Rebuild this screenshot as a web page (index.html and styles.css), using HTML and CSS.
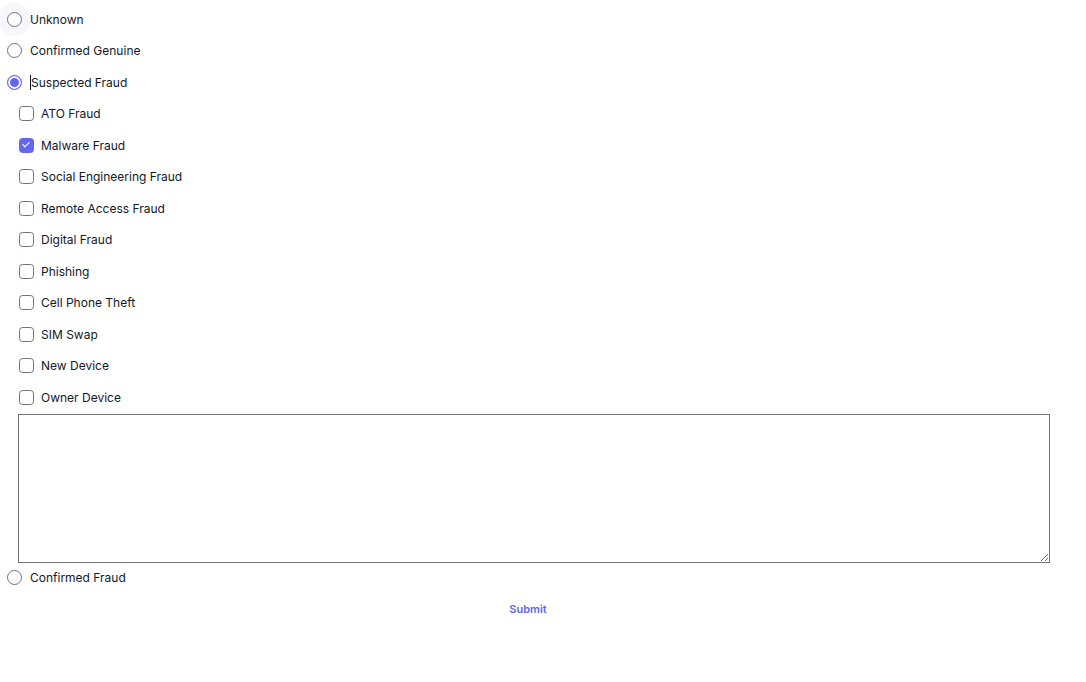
FILE: index.html
```html
<!DOCTYPE html>
<html lang="en">

<head>
    <meta charset="UTF-8">
    <meta name="viewport" content="width=device-width, initial-scale=1.0">
    <title>Fraud Review</title>
    <link rel="stylesheet" href="styles.css">
</head>

<body>

    <form class="review" id="review">
        <label class="option">
            <input type="radio" name="status" class="radio hovered" value="unknown">
            <span>Unknown</span>
        </label>
        <label class="option">
            <input type="radio" name="status" class="radio" value="genuine">
            <span>Confirmed Genuine</span>
        </label>
        <label class="option">
            <input type="radio" name="status" class="radio" value="suspected" checked>
            <span class="caret"></span><span>Suspected Fraud</span>
        </label>

        <div class="sub-options">
            <label class="option">
                <input type="checkbox" class="check" value="ato">
                <span>ATO Fraud</span>
            </label>
            <label class="option">
                <input type="checkbox" class="check" value="malware" checked>
                <span>Malware Fraud</span>
            </label>
            <label class="option">
                <input type="checkbox" class="check" value="social">
                <span>Social Engineering Fraud</span>
            </label>
            <label class="option">
                <input type="checkbox" class="check" value="remote">
                <span>Remote Access Fraud</span>
            </label>
            <label class="option">
                <input type="checkbox" class="check" value="digital">
                <span>Digital Fraud</span>
            </label>
            <label class="option">
                <input type="checkbox" class="check" value="phishing">
                <span>Phishing</span>
            </label>
            <label class="option">
                <input type="checkbox" class="check" value="theft">
                <span>Cell Phone Theft</span>
            </label>
            <label class="option">
                <input type="checkbox" class="check" value="sim">
                <span>SIM Swap</span>
            </label>
            <label class="option">
                <input type="checkbox" class="check" value="new-device">
                <span>New Device</span>
            </label>
            <label class="option">
                <input type="checkbox" class="check" value="owner-device">
                <span>Owner Device</span>
            </label>
            <textarea class="notes" name="notes"></textarea>
        </div>

        <label class="option after-notes">
            <input type="radio" name="status" class="radio" value="confirmed">
            <span>Confirmed Fraud</span>
        </label>

        <div class="actions">
            <button type="button" class="submit">Submit</button>
        </div>
    </form>

</body>

</html>
```

FILE: styles.css
```css
body {
    margin: 0;
    background-color: #fff;
    font-family: Inter, "Noto Sans", sans-serif;
    color: #111827;
}

.review {
    padding: 7px 0 0 7px;
}

.option {
    display: flex;
    align-items: center;
    height: 24px;
    margin-bottom: 7.5px;
    font-size: 12px;
    cursor: pointer;
}

.radio {
    appearance: none;
    width: 15px;
    height: 15px;
    margin: 0 8px 0 0;
    border: 1.6px solid #6b7280;
    border-radius: 50%;
    background-color: #fff;
    cursor: pointer;
}

.radio.hovered {
    box-shadow: 0 0 0 9px #f6f6fd;
}

.radio:checked {
    border-color: #6366f1;
    background-color: #6366f1;
    box-shadow: inset 0 0 0 2px #fff;
}

.caret {
    width: 1px;
    height: 15px;
    background-color: #111;
}

.sub-options {
    padding-left: 11px;
}

.check {
    appearance: none;
    position: relative;
    width: 15px;
    height: 15px;
    margin: 0 7px 0 1px;
    border: 1.6px solid #6b7280;
    border-radius: 3.5px;
    background-color: #fff;
    cursor: pointer;
}

.check:checked {
    border-color: #6366f1;
    background-color: #6366f1;
}

.check:checked::after {
    content: "";
    position: absolute;
    left: 4px;
    top: 1.5px;
    width: 3px;
    height: 6px;
    border: solid #fff;
    border-width: 0 1.6px 1.6px 0;
    transform: rotate(45deg);
}

.notes {
    display: block;
    box-sizing: border-box;
    width: 1032px;
    height: 149px;
    margin: -2.5px 0 0 0;
    border: 1px solid #767676;
    border-radius: 0;
    font-family: Inter, "Noto Sans", sans-serif;
}

.after-notes {
    margin-top: 2px;
}

.actions {
    display: flex;
    justify-content: center;
    width: 1042px;
}

.submit {
    padding: 5px 8px 3px;
    border: none;
    background: none;
    color: #6366f1;
    font-family: Inter, "Noto Sans", sans-serif;
    font-size: 11px;
    font-weight: 600;
    cursor: pointer;
}
```
